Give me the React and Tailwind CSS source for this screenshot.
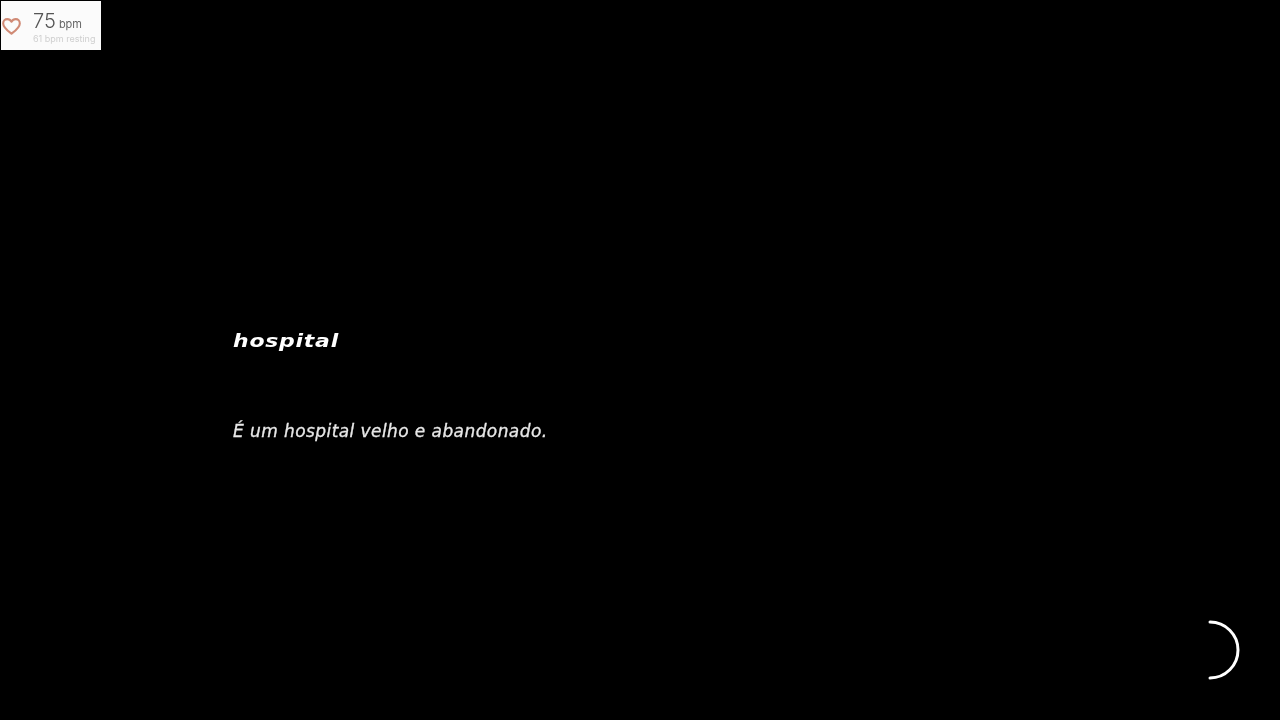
export default function App() {
  return (
    <div className="w-[1280px] h-[720px] bg-black flex flex-col overflow-hidden font-['Inter',sans-serif]">
      <div className="mt-px ml-px w-[100px] h-[49px] bg-[#fbfbfb] flex items-center blur-[0.4px]">
        <svg width="19" height="17" viewBox="0 0 20 18" className="ml-px mt-[2px] shrink-0" fill="none">
          <path d="M10 16.6 C6 13.4 1.2 10 1.2 5.7 C1.2 3 3.2 1.2 5.5 1.2 C7.4 1.2 9 2.2 10 4 C11 2.2 12.6 1.2 14.5 1.2 C16.8 1.2 18.8 3 18.8 5.7 C18.8 10 14 13.4 10 16.6 Z" stroke="#d08a75" strokeWidth="2.2" strokeLinejoin="round" />
        </svg>
        <div className="ml-[12px] mt-[1px] flex flex-col">
          <div className="flex items-baseline h-[25px] leading-[25px]">
            <span className="text-[20px] font-light text-[#555]">75</span>
            <span className="ml-[3px] text-[11px] text-[#666]">bpm</span>
          </div>
          <span className="text-[9px] leading-[10px] text-[#cfcfcf] whitespace-nowrap">61 bpm resting</span>
        </div>
      </div>

      <div className="ml-[233px] mt-[281px] h-[20px] leading-[20px] text-[17px] font-bold italic text-white tracking-[0.6px] blur-[0.35px] origin-left scale-x-[1.29] [font-family:'DejaVu_Sans',sans-serif]">
        hospital
      </div>
      <div className="ml-[233px] mt-[69px] h-[22px] leading-[22px] text-[17px] italic text-[#e8e8e8] blur-[0.35px] tracking-[0.42px] [-webkit-text-stroke:0.3px_#e8e8e8] [font-family:'DejaVu_Sans',sans-serif]">
        É um hospital velho e abandonado.
      </div>

      <svg width="34" height="60" viewBox="0 0 34 60" className="self-end mr-[40px] mt-[178px]" fill="none">
        <path d="M4 2 A28 28 0 0 1 4 58" stroke="#ffffff" strokeWidth="3" strokeLinecap="round" />
      </svg>
    </div>
  );
}
